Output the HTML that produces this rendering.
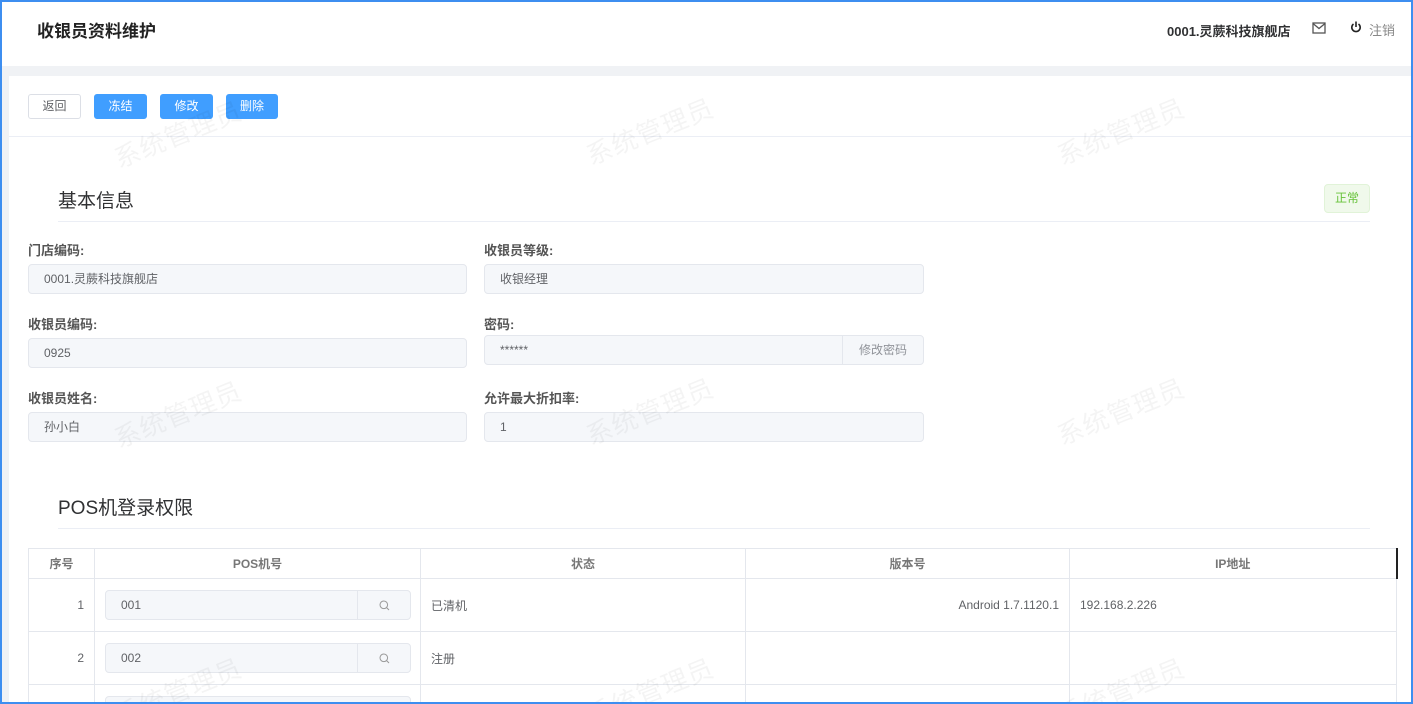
<!DOCTYPE html>
<html><head><meta charset="utf-8"><style>
*{box-sizing:border-box;margin:0;padding:0}
html,body{width:1413px;height:704px;overflow:hidden}
body{font-family:"Liberation Sans","Noto Sans CJK SC",sans-serif;color:#606266}
#w{position:relative;width:1413px;height:704px;overflow:hidden;background:#f0f2f5}
.frame{position:absolute;left:0;top:0;width:1413px;height:704px;border:2px solid #3d8ef0;z-index:20;pointer-events:none}
.hdr{position:absolute;left:0;top:0;width:1413px;height:66px;background:#fff}
.hdr .t{position:absolute;left:37px;top:17px;font-size:17px;font-weight:bold;color:#222}
.hdr .s{position:absolute;left:1167px;top:21px;font-size:13px;font-weight:bold;color:#303133}
.card{position:absolute;left:9px;top:76px;width:1402px;height:640px;background:#fff}
.a{position:absolute}
.btn{position:absolute;top:94px;height:25px;font-size:12px;border-radius:3px;text-align:center;line-height:23px}
.bp{background:#409eff;color:#fff;border:1px solid #409eff}
.lbl{position:absolute;font-size:13px;font-weight:bold;color:#555}
.inp{position:absolute;height:30px;background:#f5f7fa;border:1px solid #e4e7ed;border-radius:4px;font-size:12px;color:#606266;padding-left:15px;line-height:28px}
.h2{position:absolute;left:58px;font-size:19px;color:#303133}
.line{position:absolute;left:58px;width:1312px;height:1px;background:#ebeef5}
.wm{position:absolute;font-size:26px;color:rgba(0,0,0,0.045);transform:rotate(-22deg);z-index:10;letter-spacing:1px}
table{position:absolute;left:28px;top:548px;border-collapse:collapse;font-size:12px;table-layout:fixed}
td,th{border:1px solid #e4e7ed;height:30px}
th{font-weight:bold;color:#777;font-size:12px}
td{height:53px;font-size:12px;color:#606266}
.sb{position:absolute;right:0;top:0;width:53px;height:28px;border-left:1px solid #e4e7ed;padding:0}
.sb svg{position:absolute;left:21px;top:9px}
</style></head><body><div id="w">
<div class="hdr"><div class="t">收银员资料维护</div><div class="s">0001.灵蕨科技旗舰店</div>
<svg class="a" style="left:1312px;top:22px" width="14" height="12" viewBox="0 0 14 12"><rect x="1" y="1" width="12" height="10" fill="none" stroke="#555" stroke-width="1.3"/><path d="M1 1.5L7 6.5L13 1.5" fill="none" stroke="#555" stroke-width="1.3"/></svg>
<svg class="a" style="left:1350px;top:21px" width="12" height="12" viewBox="0 0 12 12"><path d="M3.5 3A4.2 4.2 0 1 0 8.5 3" fill="none" stroke="#222" stroke-width="1.6"/><path d="M6 0.5V6" stroke="#222" stroke-width="1.6"/></svg>
<div class="a" style="left:1369px;top:20px;font-size:13px;color:#888">注销</div></div>
<div class="card"></div>
<div class="a" style="left:9px;top:136px;width:1402px;height:1px;background:#ebeef5"></div>
<div class="btn" style="left:28px;width:53px;border:1px solid #dcdfe6;color:#606266;background:#fff">返回</div>
<div class="btn bp" style="left:94px;width:53px">冻结</div>
<div class="btn bp" style="left:160px;width:53px">修改</div>
<div class="btn bp" style="left:226px;width:52px">删除</div>
<div class="h2" style="top:186px">基本信息</div>
<div class="line" style="top:221px"></div>
<div class="a" style="left:1324px;top:184px;width:46px;height:29px;background:#f0f9eb;border:1px solid #e1f3d8;border-radius:4px;color:#67c23a;font-size:12px;text-align:center;line-height:27px">正常</div>
<div class="lbl" style="left:28px;top:240px">门店编码:</div>
<div class="lbl" style="left:484px;top:240px">收银员等级:</div>
<div class="inp" style="left:28px;top:264px;width:439px">0001.灵蕨科技旗舰店</div>
<div class="inp" style="left:484px;top:264px;width:440px">收银经理</div>
<div class="lbl" style="left:28px;top:314px">收银员编码:</div>
<div class="lbl" style="left:484px;top:314px">密码:</div>
<div class="inp" style="left:28px;top:338px;width:439px">0925</div>
<div class="inp" style="left:484px;top:335px;width:440px">******<div class="a" style="right:0;top:0;width:81px;height:28px;border-left:1px solid #e4e7ed;text-align:center;color:#909399;padding:0">修改密码</div></div>
<div class="lbl" style="left:28px;top:388px">收银员姓名:</div>
<div class="lbl" style="left:484px;top:388px">允许最大折扣率:</div>
<div class="inp" style="left:28px;top:412px;width:439px">孙小白</div>
<div class="inp" style="left:484px;top:412px;width:440px">1</div>
<div class="h2" style="top:493px">POS机登录权限</div>
<div class="line" style="top:528px"></div>
<table>
<colgroup><col style="width:66px"><col style="width:326px"><col style="width:325px"><col style="width:324px"><col style="width:327px"></colgroup>
<tr><th>序号</th><th>POS机号</th><th>状态</th><th>版本号</th><th style="border-right:2px solid #222">IP地址</th></tr>
<tr><td style="text-align:right;padding-right:10px">1</td><td style="position:relative"><div class="inp" style="left:10px;top:11px;width:306px">001<div class="sb"><svg width="11" height="11" viewBox="0 0 11 11"><circle cx="4.8" cy="4.8" r="3.8" fill="none" stroke="#999" stroke-width="1"/><path d="M7.6 7.6L10 10" stroke="#999" stroke-width="1"/></svg></div></div></td><td style="padding-left:10px">已清机</td><td style="text-align:right;padding-right:10px">Android 1.7.1120.1</td><td style="padding-left:10px">192.168.2.226</td></tr>
<tr><td style="text-align:right;padding-right:10px">2</td><td style="position:relative"><div class="inp" style="left:10px;top:11px;width:306px">002<div class="sb"><svg width="11" height="11" viewBox="0 0 11 11"><circle cx="4.8" cy="4.8" r="3.8" fill="none" stroke="#999" stroke-width="1"/><path d="M7.6 7.6L10 10" stroke="#999" stroke-width="1"/></svg></div></div></td><td style="padding-left:10px">注册</td><td></td><td></td></tr>
<tr><td></td><td style="position:relative"><div class="inp" style="left:10px;top:11px;width:306px"></div></td><td></td><td></td><td></td></tr>
</table>
<div class="wm" style="left:110px;top:115px">系统管理员</div>
<div class="wm" style="left:582px;top:112px">系统管理员</div>
<div class="wm" style="left:1053px;top:112px">系统管理员</div>
<div class="wm" style="left:110px;top:395px">系统管理员</div>
<div class="wm" style="left:582px;top:392px">系统管理员</div>
<div class="wm" style="left:1053px;top:392px">系统管理员</div>
<div class="wm" style="left:110px;top:672px">系统管理员</div>
<div class="wm" style="left:582px;top:672px">系统管理员</div>
<div class="wm" style="left:1053px;top:672px">系统管理员</div>
<div class="frame"></div>
</div></body></html>
